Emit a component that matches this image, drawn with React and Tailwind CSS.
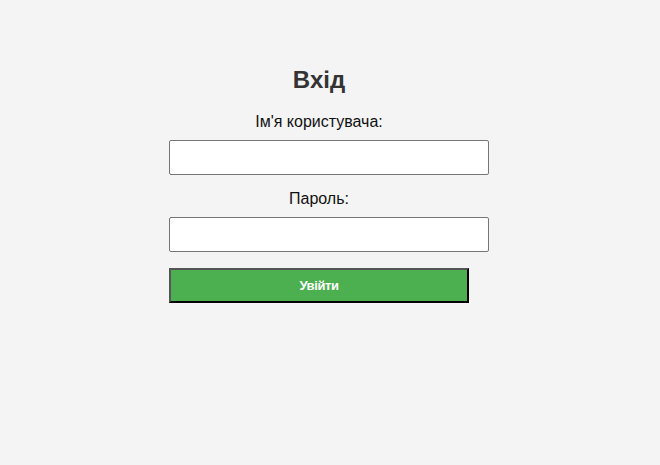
import React from 'react';

export default function App() {
	return (
		<div className="min-h-[465px] w-full bg-[#f4f4f4] pt-[66px]" style={{ fontFamily: '"Liberation Sans", Arial, sans-serif' }}>
			<div className="mx-auto w-[322px]">
				<form className="w-[300px] flex flex-col" onSubmit={(e) => e.preventDefault()}>
					<h2 className="text-[24px] leading-[28px] font-bold text-[#333] text-center">Вхід</h2>
					<label className="mt-[19px] text-[16px] leading-[18px] text-[#111] text-center">Ім'я користувача:</label>
					<input type="text" className="mt-[9px] w-[320px] h-[35px] bg-white border border-[#767676] rounded-[2px] px-2 outline-none" />
					<label className="mt-[15px] text-[16px] leading-[18px] text-[#111] text-center">Пароль:</label>
					<input type="password" className="mt-[9px] w-[320px] h-[35px] bg-white border border-[#767676] rounded-[2px] px-2 outline-none" />
					<button type="submit" className="mt-[16px] w-[300px] h-[35px] bg-[#4CAF50] text-white text-[13px] font-bold tracking-[-0.4px] border-2 border-t-[#555] border-l-[#555] border-r-black border-b-black">
						Увійти
					</button>
				</form>
			</div>
		</div>
	);
}
